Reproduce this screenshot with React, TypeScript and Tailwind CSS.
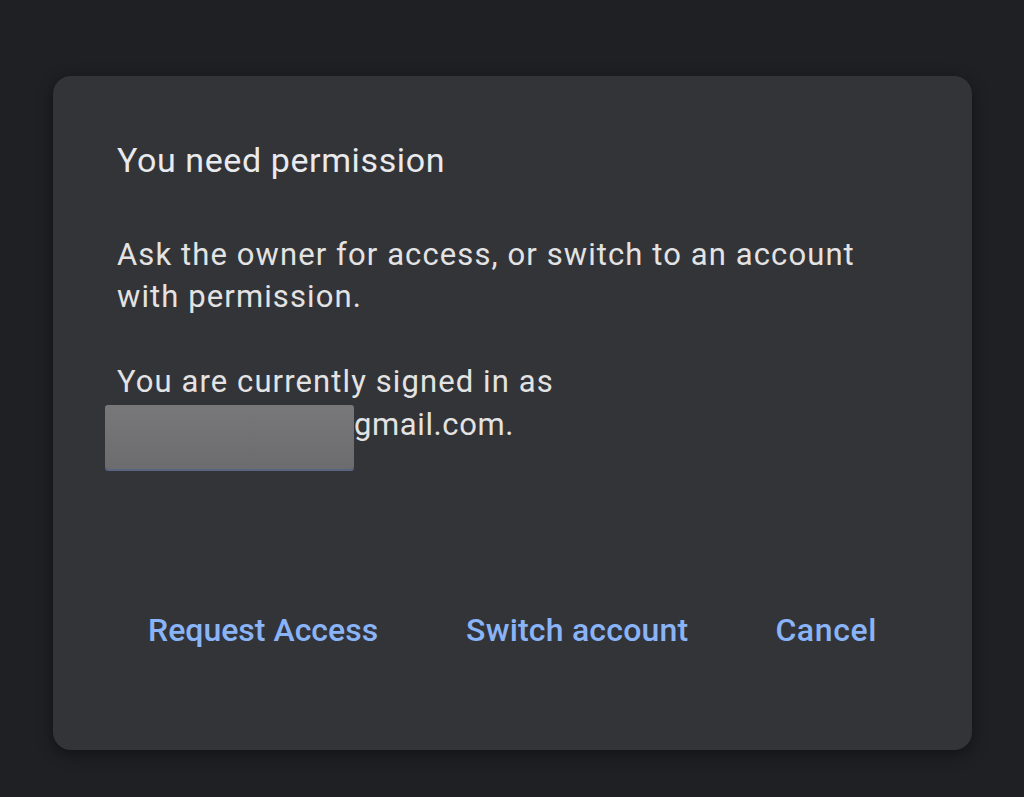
import React from "react";

export default function App() {
  return (
    <div
      className="w-[1024px] h-[797px] bg-[#1f2024] pt-[76px] pl-[53px] overflow-hidden"
      style={{ fontFamily: "Roboto, 'Open Sans', sans-serif" }}
    >
      <div className="w-[919px] h-[674px] bg-[#333438] rounded-[18px] shadow-[0_4px_16px_rgba(0,0,0,0.45)] flex flex-col pl-[64px] pr-[40px]">
        <div className="mt-[63px] text-[34px] leading-[42px] text-[#e8eaed] font-normal tracking-[0.6px] whitespace-nowrap">
          You need permission
        </div>
        <div className="mt-[53px] text-[31px] leading-[42px] text-[#e3e3e3] tracking-[1.1px] whitespace-nowrap">
          <div>Ask the owner for access, or switch to an account</div>
          <div>with permission.</div>
        </div>
        <div className="mt-[42px] text-[31px] leading-[43px] text-[#e3e3e3] tracking-[1.1px] whitespace-nowrap">
          <div>You are currently signed in as</div>
          <div className="flex items-start h-[43px]">
            <div className="shrink-0 -ml-[12px] mt-[2px] w-[249px] h-[64px] rounded-[3px] bg-gradient-to-b from-[#78787a] to-[#6c6c6e] shadow-[0_2px_0_#5a6482]" />
            <span className="tracking-[0.6px]">gmail.com.</span>
          </div>
        </div>
        <div className="mt-[164px] flex items-center text-[32px] leading-[40px] text-[#8ab4f8] font-medium whitespace-nowrap">
          <span className="ml-[31px]">Request Access</span>
          <span className="ml-[88px] tracking-[0.2px]">Switch account</span>
          <span className="ml-[87px] tracking-[0.6px]">Cancel</span>
        </div>
      </div>
    </div>
  );
}
